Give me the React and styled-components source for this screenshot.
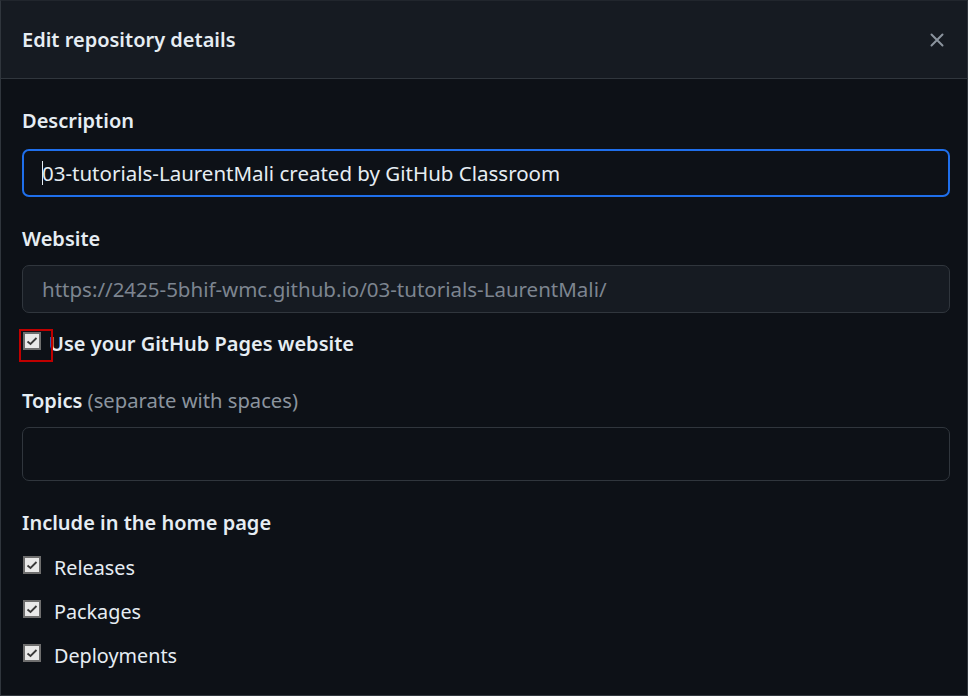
import React from "react";
import styled, { createGlobalStyle } from "styled-components";

const Global = createGlobalStyle`
  html, body { margin: 0; padding: 0; background: #0d1117; }
  body { font-family: "Noto Sans", "Open Sans", sans-serif; }
  * { box-sizing: border-box; }
`;

const Dialog = styled.div`
  width: 968px;
  height: 696px;
  background: #0d1117;
  border: 1px solid #30363d;
  border-top-color: #21262d;
  display: flex;
  flex-direction: column;
  overflow: hidden;
`;

const Header = styled.div`
  height: 78px;
  flex: none;
  background: #161b22;
  border-bottom: 1px solid #30363d;
  display: flex;
  align-items: center;
  justify-content: space-between;
  padding: 0 21px 0 21px;
`;

const Title = styled.h1`
  margin: 0;
  font-size: 20px;
  font-weight: 600;
  color: #e6edf3;
`;

const CloseButton = styled.button`
  background: none;
  border: none;
  padding: 0;
  width: 16px;
  height: 16px;
  display: flex;
  align-items: center;
  justify-content: center;
  color: #8b949e;
  cursor: pointer;
  margin-right: 1px;
`;

const Body = styled.div`
  padding: 28px 17px 0 21px;
  display: flex;
  flex-direction: column;
`;

const Label = styled.div`
  height: 28px;
  line-height: 28px;
  font-size: 20px;
  font-weight: 600;
  color: #e6edf3;
  margin-top: ${(p) => p.$mt || 0}px;
  white-space: nowrap;
`;

const Hint = styled.span`
  font-weight: 400;
  color: #8b949e;
  font-size: 20.2px;
`;

const Input = styled.div`
  margin-top: ${(p) => p.$mt || 12}px;
  height: ${(p) => p.$h || 48}px;
  border-radius: 7px;
  border: ${(p) => (p.$focus ? "2px solid #1f6feb" : "1px solid #30363d")};
  background: ${(p) => (p.$disabled ? "#161b22" : "#0d1117")};
  color: ${(p) => (p.$disabled ? "#7d8590" : "#e6edf3")};
  font-size: 20.5px;
  display: flex;
  align-items: center;
  padding-left: ${(p) => (p.$focus ? 18 : 19)}px;
  white-space: nowrap;
`;

const Caret = styled.span`
  display: inline-block;
  width: 1px;
  height: 24px;
  background: #e6edf3;
  margin-right: -1px;
  vertical-align: middle;
`;

const CheckRow = styled.div`
  height: 28px;
  margin-top: ${(p) => p.$mt || 16}px;
  display: flex;
  align-items: center;
  gap: ${(p) => p.$gap || 13}px;
  font-size: ${(p) => (p.$bold ? 20 : 19.8)}px;
  font-weight: ${(p) => (p.$bold ? 600 : 400)};
  color: #e6edf3;
  white-space: nowrap;
`;

const BoxWrap = styled.span`
  position: relative;
  display: inline-flex;
  margin-left: 1px;
  margin-top: -4px;
`;

const Box = styled.span`
  width: 18px;
  height: 18px;
  background: #e9e9e9;
  border: 2px solid #6e6e6e;
  display: flex;
  align-items: center;
  justify-content: center;
`;

const Highlight = styled.span`
  position: absolute;
  left: -4px;
  top: -3px;
  width: 34px;
  height: 33px;
  border: 2px solid #c00000;
  pointer-events: none;
`;

const Check = ({ highlight }) => (
  <BoxWrap>
    <Box>
      <svg width="12" height="10" viewBox="0 0 12 10">
        <path d="M1.5 5.5 L4.5 8 L10.5 2" fill="none" stroke="#3a3a3a" strokeWidth="1.8" />
      </svg>
    </Box>
    {highlight && <Highlight />}
  </BoxWrap>
);

export default function App() {
  return (
    <>
      <Global />
      <Dialog>
        <Header>
          <Title>Edit repository details</Title>
          <CloseButton aria-label="Close">
            <svg width="14" height="14" viewBox="0 0 14 14">
              <path d="M1.5 1.5 L12.5 12.5 M12.5 1.5 L1.5 12.5" stroke="currentColor" strokeWidth="2" strokeLinecap="round" />
            </svg>
          </CloseButton>
        </Header>
        <Body>
          <Label>Description</Label>
          <Input $focus $mt={14}>
            <Caret />
            03-tutorials-LaurentMali created by GitHub Classroom
          </Input>
          <Label $mt={28}>Website</Label>
          <Input $disabled $mt={12}>
            https://2425-5bhif-wmc.github.io/03-tutorials-LaurentMali/
          </Input>
          <CheckRow $bold $gap={8} $mt={16}>
            <Check highlight />
            Use your GitHub Pages website
          </CheckRow>
          <Label $mt={29}>
            Topics <Hint>(separate with spaces)</Hint>
          </Label>
          <Input $mt={13} $h={54} />
          <Label $mt={28}>Include in the home page</Label>
          <CheckRow $mt={16}>
            <Check />
            Releases
          </CheckRow>
          <CheckRow>
            <Check />
            Packages
          </CheckRow>
          <CheckRow>
            <Check />
            Deployments
          </CheckRow>
        </Body>
      </Dialog>
    </>
  );
}
